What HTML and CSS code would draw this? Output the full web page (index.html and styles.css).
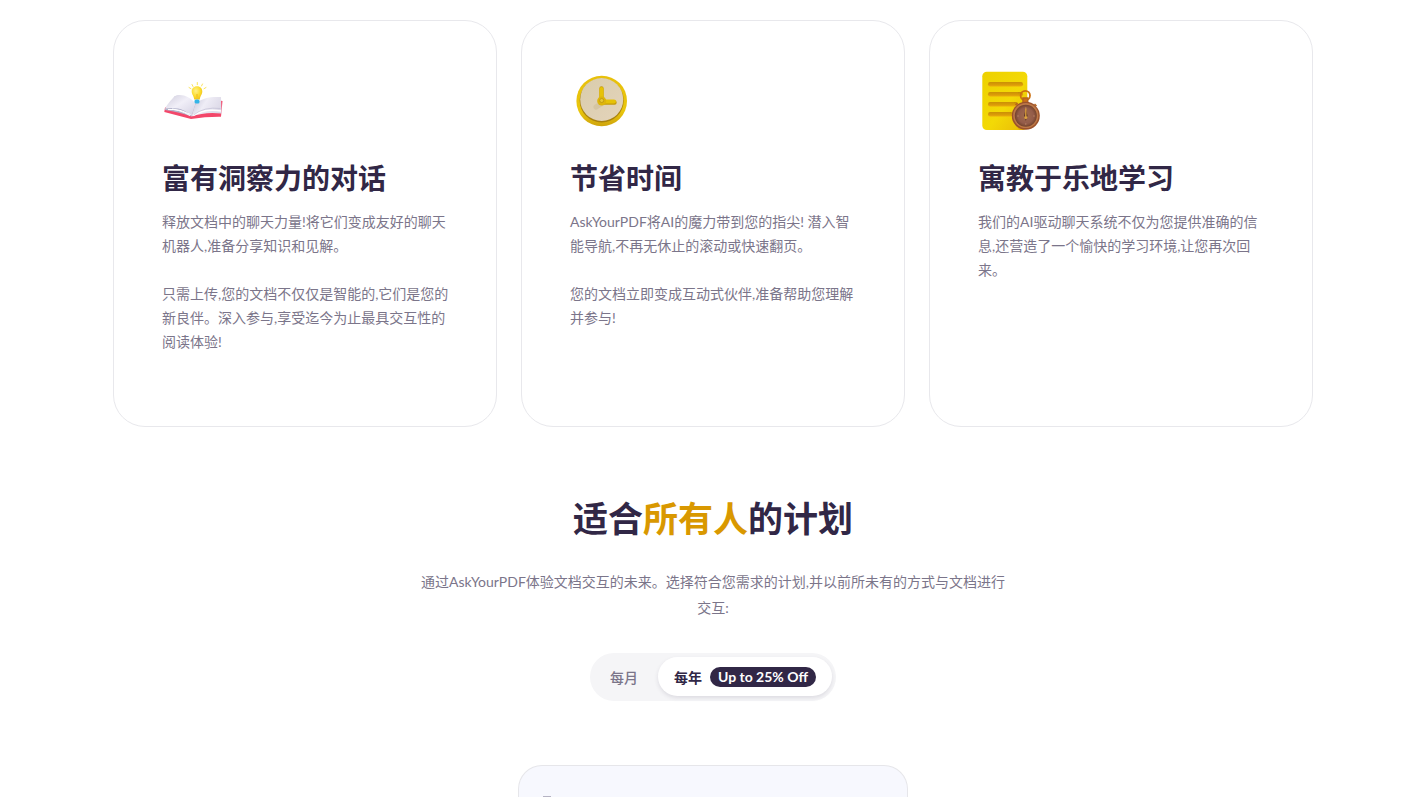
FILE: index.html
```html
<!DOCTYPE html>
<html lang="zh">
<head>
<meta charset="utf-8">
<meta name="viewport" content="width=device-width, initial-scale=1">
<title>AskYourPDF</title>
<link rel="stylesheet" href="styles.css">
</head>
<body>
<main class="page">
  <section class="features">
    <article class="feature">
      <svg class="feature-icon" viewBox="0 0 64 64" aria-hidden="true">
        <defs>
          <linearGradient id="pageLeft" x1="0" y1="0" x2="1" y2="1">
            <stop offset="0" stop-color="#cfccdc"/><stop offset=".45" stop-color="#f1eff8"/><stop offset="1" stop-color="#d3d0e2"/>
          </linearGradient>
          <linearGradient id="pageRight" x1="0" y1="0" x2="1" y2="0.4">
            <stop offset="0" stop-color="#c3c0d4"/><stop offset=".5" stop-color="#efedf6"/><stop offset="1" stop-color="#dddae8"/>
          </linearGradient>
          <radialGradient id="bulb" cx=".4" cy=".35" r=".7">
            <stop offset="0" stop-color="#fff08a"/><stop offset=".6" stop-color="#fbdc2c"/><stop offset="1" stop-color="#eebd1c"/>
          </radialGradient>
        </defs>
        <path d="M3 38.500L2.300 43L29 50Q44 47.500 59 47.700L60.500 32L57.500 31.500Z" fill="#f3476a"/>
        <path d="M3 40L13 27L34 36L29.500 47.500Q18 43 3 41Z" fill="#b3b3cb"/>
        <path d="M3 39.500Q8 31 14 26.500C21 25 28 28 33.500 34.500L29.500 47Q22 40 16 39.500Q9 38.500 3 39.500Z" fill="url(#pageLeft)"/>
        <path d="M6 40.500Q16 39.500 28 46.500M10 40Q19 40.500 28.500 45.500" fill="none" stroke="#fff" stroke-width="1"/>
        <path d="M33.500 34.500C40 29 48 27.500 59 28L59.500 44.500Q43 42.500 29.500 47.500Z" fill="url(#pageRight)"/>
        <path d="M31 46.500Q43 39 59 42" fill="none" stroke="#fff" stroke-width="1.500"/>
        <path d="M31.500 46Q42 37.500 58.500 39.500" fill="none" stroke="#c2bfd4" stroke-width=".7"/>
        <path d="M35 17.200c3.400 0 5.300 2.300 5.300 5.200 0 3.200-2.200 4.200-2.500 8.100h-5.600c-.3-3.900-2.500-4.900-2.500-8.100 0-2.900 1.900-5.200 5.300-5.200Z" fill="url(#bulb)"/>
        <path d="M35 25v3.500" stroke="#f5c22d" stroke-width="1.500"/>
        <rect x="32.500" y="30.500" width="5" height="4" rx="1.500" fill="#35b4e7"/>
        <path d="M35.300 13.500v2.200M30 15.500l1 2M40.500 15l-1 2M27 18.500l2 1.200M44 18.500l-2 1.200" stroke="#fae45b" stroke-width="1" stroke-linecap="round"/>
      </svg>
      <h2 class="feature-title">富有洞察力的对话</h2>
      <div class="feature-text">
        <p>释放文档中的聊天力量!将它们变成友好的聊天机器人,准备分享知识和见解。</p>
        <p>只需上传,您的文档不仅仅是智能的,它们是您的新良伴。深入参与,享受迄今为止最具交互性的阅读体验!</p>
      </div>
    </article>

    <article class="feature">
      <svg class="feature-icon" viewBox="0 0 64 64" aria-hidden="true">
        <defs>
          <linearGradient id="rim" x1="0" y1="0" x2="0" y2="1">
            <stop offset="0" stop-color="#e8c00b"/><stop offset=".7" stop-color="#e9c60d"/><stop offset="1" stop-color="#cfa40c"/>
          </linearGradient>
          <linearGradient id="face" x1="0" y1="0" x2="1" y2="1">
            <stop offset="0" stop-color="#d9ccac"/><stop offset="1" stop-color="#e4d4bb"/>
          </linearGradient>
        </defs>
        <circle cx="31.700" cy="32" r="25.300" fill="url(#rim)"/>
        <circle cx="31.700" cy="31.500" r="22" fill="#a9820f"/>
        <circle cx="31.700" cy="30.500" r="21.500" fill="url(#face)"/>
        <path d="M31 35l-5 3" stroke="#cdbb93" stroke-width="5" stroke-linecap="round" opacity=".5"/>
        <path d="M31.500 19.500V32.500M33 33.500H44.500" fill="none" stroke="#c59a0a" stroke-width="4.400" stroke-linecap="round"/>
        <path d="M31.500 20V31.500M33 32.500H44" fill="none" stroke="#e6c208" stroke-width="4" stroke-linecap="round"/>
        <circle cx="31.700" cy="32" r="4.500" fill="#ddb50b"/>
        <circle cx="31.700" cy="31.500" r="2" fill="#e8c931" stroke="#b88d12" stroke-width=".7"/>
      </svg>
      <h2 class="feature-title">节省时间</h2>
      <div class="feature-text">
        <p>AskYourPDF将AI的魔力带到您的指尖! 潜入智能导航,不再无休止的滚动或快速翻页。</p>
        <p>您的文档立即变成互动式伙伴,准备帮助您理解并参与!</p>
      </div>
    </article>

    <article class="feature">
      <svg class="feature-icon" viewBox="0 0 64 64" aria-hidden="true">
        <defs>
          <linearGradient id="sheet" x1="0" y1="0" x2="1" y2="1">
            <stop offset="0" stop-color="#edd100"/><stop offset=".55" stop-color="#f3d906"/><stop offset="1" stop-color="#e9b908"/>
          </linearGradient>
          <linearGradient id="line" x1="0" y1="0" x2="0" y2="1">
            <stop offset="0" stop-color="#c08706"/><stop offset="1" stop-color="#edab0b"/>
          </linearGradient>
          <radialGradient id="dial" cx=".5" cy=".5" r=".5">
            <stop offset="0" stop-color="#a06a4c"/><stop offset=".7" stop-color="#935c4a"/><stop offset="1" stop-color="#74432c"/>
          </radialGradient>
        </defs>
        <rect x="4.300" y="2.800" width="45" height="58.200" rx="4.500" fill="url(#sheet)"/>
        <g fill="url(#line)">
          <rect x="10" y="13" width="35" height="4.600" rx="2.300"/>
          <rect x="10" y="23" width="35" height="4.600" rx="2.300"/>
          <rect x="10" y="33" width="30" height="4.600" rx="2.300"/>
          <rect x="10" y="43" width="25" height="4.600" rx="2.300"/>
        </g>
        <path d="M12 14.200h31M12 24.200h28M12 34.200h24M12 44.200h20" stroke="#d59806" stroke-width="1.200"/>
        <path d="M36 38Q34 52 41 60.500H46V38Z" fill="#d48b0b" opacity=".6"/>
        <circle cx="47.300" cy="26.500" r="4.700" fill="none" stroke="#cc7011" stroke-width="1.800"/>
        <path d="M45 29h4.700v6H45ZM37.500 36l2-2M56.500 35l2 2" fill="#c9701a" stroke="#b7641d" stroke-width="1.500"/>
        <circle cx="47.800" cy="46.800" r="14" fill="#9b522c"/>
        <circle cx="47.800" cy="46.500" r="12.600" fill="#bd7847"/>
        <circle cx="47.800" cy="46.800" r="11" fill="url(#dial)"/>
        <path d="M47.800 38v2M47.800 54v2M39 47h2M55 47h2" stroke="#b98362" stroke-width=".8"/>
        <path d="M47.800 39.500L49.500 46.500 47.800 52 46.100 46.500Z" fill="#5d3526"/>
        <path d="M47.800 39.500v8" stroke="#dfa13c" stroke-width="1.300"/>
        <circle cx="47.800" cy="48.500" r="1.500" fill="#dda33f"/>
      </svg>
      <h2 class="feature-title">寓教于乐地学习</h2>
      <div class="feature-text">
        <p>我们的AI驱动聊天系统不仅为您提供准确的信息,还营造了一个愉快的学习环境,让您再次回来。</p>
      </div>
    </article>
  </section>

  <section class="pricing">
    <h1 class="pricing-title">适合<span class="accent">所有人</span>的计划</h1>
    <p class="pricing-text">通过AskYourPDF体验文档交互的未来。选择符合您需求的计划,并以前所未有的方式与文档进行交互:</p>
    <div class="toggle">
      <button class="toggle-option" type="button" aria-pressed="false">每月</button>
      <button class="toggle-option active" type="button" aria-pressed="true">每年 <span class="badge">Up to 25% Off</span></button>
    </div>
    <article class="plan"><span class="plan-mark"></span></article>
  </section>
</main>
</body>
</html>
```
FILE: styles.css
```css
* {
  box-sizing: border-box;
}

body {
  margin: 0;
  background: #fff;
  color: #312746;
  font-family: Lato, "Noto Sans CJK SC", sans-serif;
  font-size: 14px;
}

h1, h2, p {
  margin: 0;
}

.page {
  display: flex;
  flex-direction: column;
  height: 100vh;
  padding: 20px 25px 0 24px;
  overflow: hidden;
}

.features {
  display: grid;
  grid-template-columns: repeat(3, 1fr);
  gap: 24px;
  width: 100%;
  max-width: 1200px;
  margin: 0 auto;
}

.feature {
  padding: 48px 46px 72px 48px;
  border: 1px solid #e8e8ec;
  border-radius: 32px;
}

.feature-icon {
  display: block;
  width: 64px;
  height: 64px;
}

.feature-title {
  margin: 25px 0 11px;
  font-size: 28px;
  font-weight: 700;
  line-height: 41px;
}

.feature-text {
  display: grid;
  gap: 24px;
  color: #7b758a;
  line-height: 24px;
}

.pricing {
  display: flex;
  flex: 1 0 auto;
  flex-direction: column;
  align-items: center;
  padding-top: 64px;
}

.pricing-title {
  font-size: 35px;
  font-weight: 700;
  line-height: 54px;
}

.accent {
  color: #d99800;
}

.pricing-text {
  max-width: 588px;
  margin-top: 24px;
  color: #7b758a;
  line-height: 26px;
  text-align: center;
}

.toggle {
  display: flex;
  gap: 4px;
  margin-top: 32px;
  padding: 4px 4px 5px;
  border-radius: 24px;
  background: #f5f5f7;
}

.toggle-option {
  display: flex;
  align-items: center;
  gap: 8px;
  height: 39px;
  padding: 0 16px;
  border: 0;
  border-radius: 20px;
  background: transparent;
  color: #7b758a;
  font: inherit;
  font-weight: 500;
}

.toggle-option.active {
  background: #fff;
  box-shadow: 0 2px 4px rgba(49, 39, 70, 0.12);
  color: #312746;
  font-weight: 700;
}

.badge {
  padding: 0 8px;
  border-radius: 10px;
  background: #312746;
  color: #fff;
  line-height: 20px;
}

.plan {
  flex: 1 0 32px;
  width: 100%;
  max-width: 390px;
  margin-top: 64px;
  padding: 30px 24px 0;
  border: 1px solid #e6e6ea;
  border-bottom: 0;
  border-radius: 24px 24px 0 0;
  background: #f7f8fe;
}

.plan-mark {
  display: block;
  width: 8px;
  height: 1px;
  background: #b5b3c3;
}
```
